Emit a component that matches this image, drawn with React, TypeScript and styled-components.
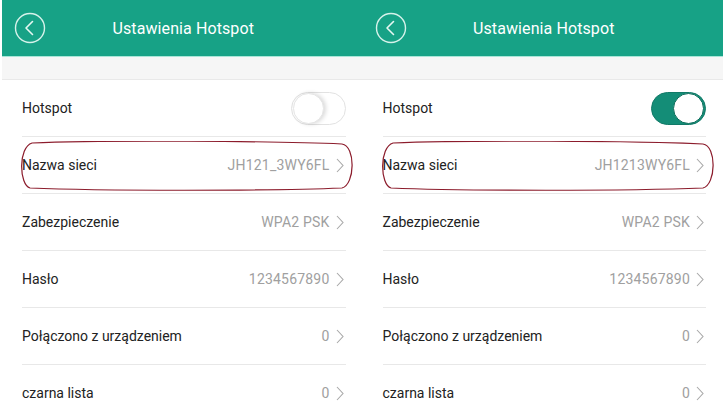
import styled, { createGlobalStyle } from "styled-components";

const GlobalStyle = createGlobalStyle`
  body {
    margin: 0;
    background: #ffffff;
    font-family: Roboto, "Liberation Sans", Arial, sans-serif;
  }
`;

type Item = { label: string; value: string; marked?: boolean };

function BackIcon() {
  return (
    <svg width="32" height="32" viewBox="0 0 32 32">
      <circle cx="16" cy="16" r="14.5" fill="none" stroke="#d6f2ea" strokeWidth="1.4" />
      <path d="M18.5 9.5 L12 16 L18.5 22.5" fill="none" stroke="#e6f7f2" strokeWidth="1.6" strokeLinecap="round" strokeLinejoin="round" />
    </svg>
  );
}

function Chevron() {
  return (
    <svg width="8" height="15" viewBox="0 0 8 15">
      <path d="M1 1 L7 7.5 L1 14" fill="none" stroke="#a8a8a8" strokeWidth="1.1" />
    </svg>
  );
}

function Mark() {
  return (
    <MarkSvg viewBox="0 0 336 50" preserveAspectRatio="none">
      <path
        d="M14 2 C80 -1 260 0 322 3 C336 5 335 44 322 47 C250 50 80 50 12 47 C1 44 0 6 14 2 Z"
        fill="none"
        stroke="#8c1c2c"
        strokeWidth="1.2"
      />
    </MarkSvg>
  );
}

function Panel({ on, network }: { on: boolean; network: string }) {
  const items: Item[] = [
    { label: "Nazwa sieci", value: network, marked: true },
    { label: "Zabezpieczenie", value: "WPA2 PSK" },
    { label: "Hasło", value: "1234567890" },
    { label: "Połączono z urządzeniem", value: "0" },
    { label: "czarna lista", value: "0" },
  ];
  return (
    <PanelWrapper>
      <Header>
        <BackButton>
          <BackIcon />
        </BackButton>
        <Title>Ustawienia Hotspot</Title>
      </Header>
      <Band />
      <List>
        <Row>
          <Label>Hotspot</Label>
          <Toggle $on={on}>
            <Knob $on={on} />
          </Toggle>
        </Row>
        {items.map((item) => (
          <Row key={item.label}>
            <Label>{item.label}</Label>
            <Value>
              {item.value}
              <Chevron />
            </Value>
            {item.marked && <Mark />}
          </Row>
        ))}
      </List>
    </PanelWrapper>
  );
}

export default function App() {
  return (
    <>
      <GlobalStyle />
      <Page>
        <Panel on={false} network="JH121_3WY6FL" />
        <Panel on={true} network="JH1213WY6FL" />
      </Page>
    </>
  );
}

const Page = styled.div`
  display: flex;
  padding-left: 2px;
  width: 723px;
  height: 419px;
  overflow: hidden;
  box-sizing: border-box;
  background: #ffffff;
`;

const PanelWrapper = styled.section`
  flex: 1;
  display: flex;
  flex-direction: column;
  background: #ffffff;
`;

const Header = styled.header`
  flex-shrink: 0;
  height: 56px;
  background: #17a286;
  border-bottom: 1px solid #a8e6d8;
  display: flex;
  align-items: center;
`;

const BackButton = styled.div`
  width: 32px;
  height: 32px;
  margin-left: 12px;
  display: flex;
`;

const Title = styled.h1`
  margin: 0;
  flex: 1;
  text-align: center;
  padding-right: 42px;
  font-size: 16px;
  font-weight: 400;
  color: #ffffff;
  letter-spacing: 0.1px;
`;

const Band = styled.div`
  flex-shrink: 0;
  height: 22px;
  background: #f6f6f6;
  border-bottom: 1px solid #e9e9e9;
`;

const List = styled.div`
  flex-shrink: 0;
  display: flex;
  flex-direction: column;
  padding: 0 17px 0 20px;
`;

const Row = styled.div`
  flex-shrink: 0;
  position: relative;
  height: 56px;
  display: flex;
  align-items: center;
  justify-content: space-between;
  border-bottom: 1px solid #e8e8e8;
`;

const Label = styled.span`
  font-size: 14px;
  color: #222222;
`;

const Value = styled.span`
  display: flex;
  align-items: center;
  gap: 6px;
  padding-right: 2px;
  font-size: 14px;
  color: #a0a0a0;
  letter-spacing: 0.2px;
`;

const Toggle = styled.div<{ $on: boolean }>`
  width: 55px;
  height: 33px;
  border-radius: 17px;
  box-sizing: border-box;
  border: 1px solid ${(p) => (p.$on ? "#127a68" : "#e2e2e2")};
  background: ${(p) => (p.$on ? "#148d77" : "#ffffff")};
  display: flex;
  align-items: center;
  justify-content: ${(p) => (p.$on ? "flex-end" : "flex-start")};
  padding: 0 1px;
`;

const Knob = styled.div<{ $on: boolean }>`
  width: 31px;
  height: 31px;
  border-radius: 50%;
  background: #ffffff;
  box-sizing: border-box;
  border: 1px solid ${(p) => (p.$on ? "#0f6e5c" : "#e6e6e6")};
  box-shadow: ${(p) => (p.$on ? "none" : "2px 0 4px rgba(0,0,0,0.15)")};
`;

const MarkSvg = styled.svg`
  position: absolute;
  left: -4px;
  top: 4px;
  width: 338px;
  height: 50px;
  pointer-events: none;
`;
